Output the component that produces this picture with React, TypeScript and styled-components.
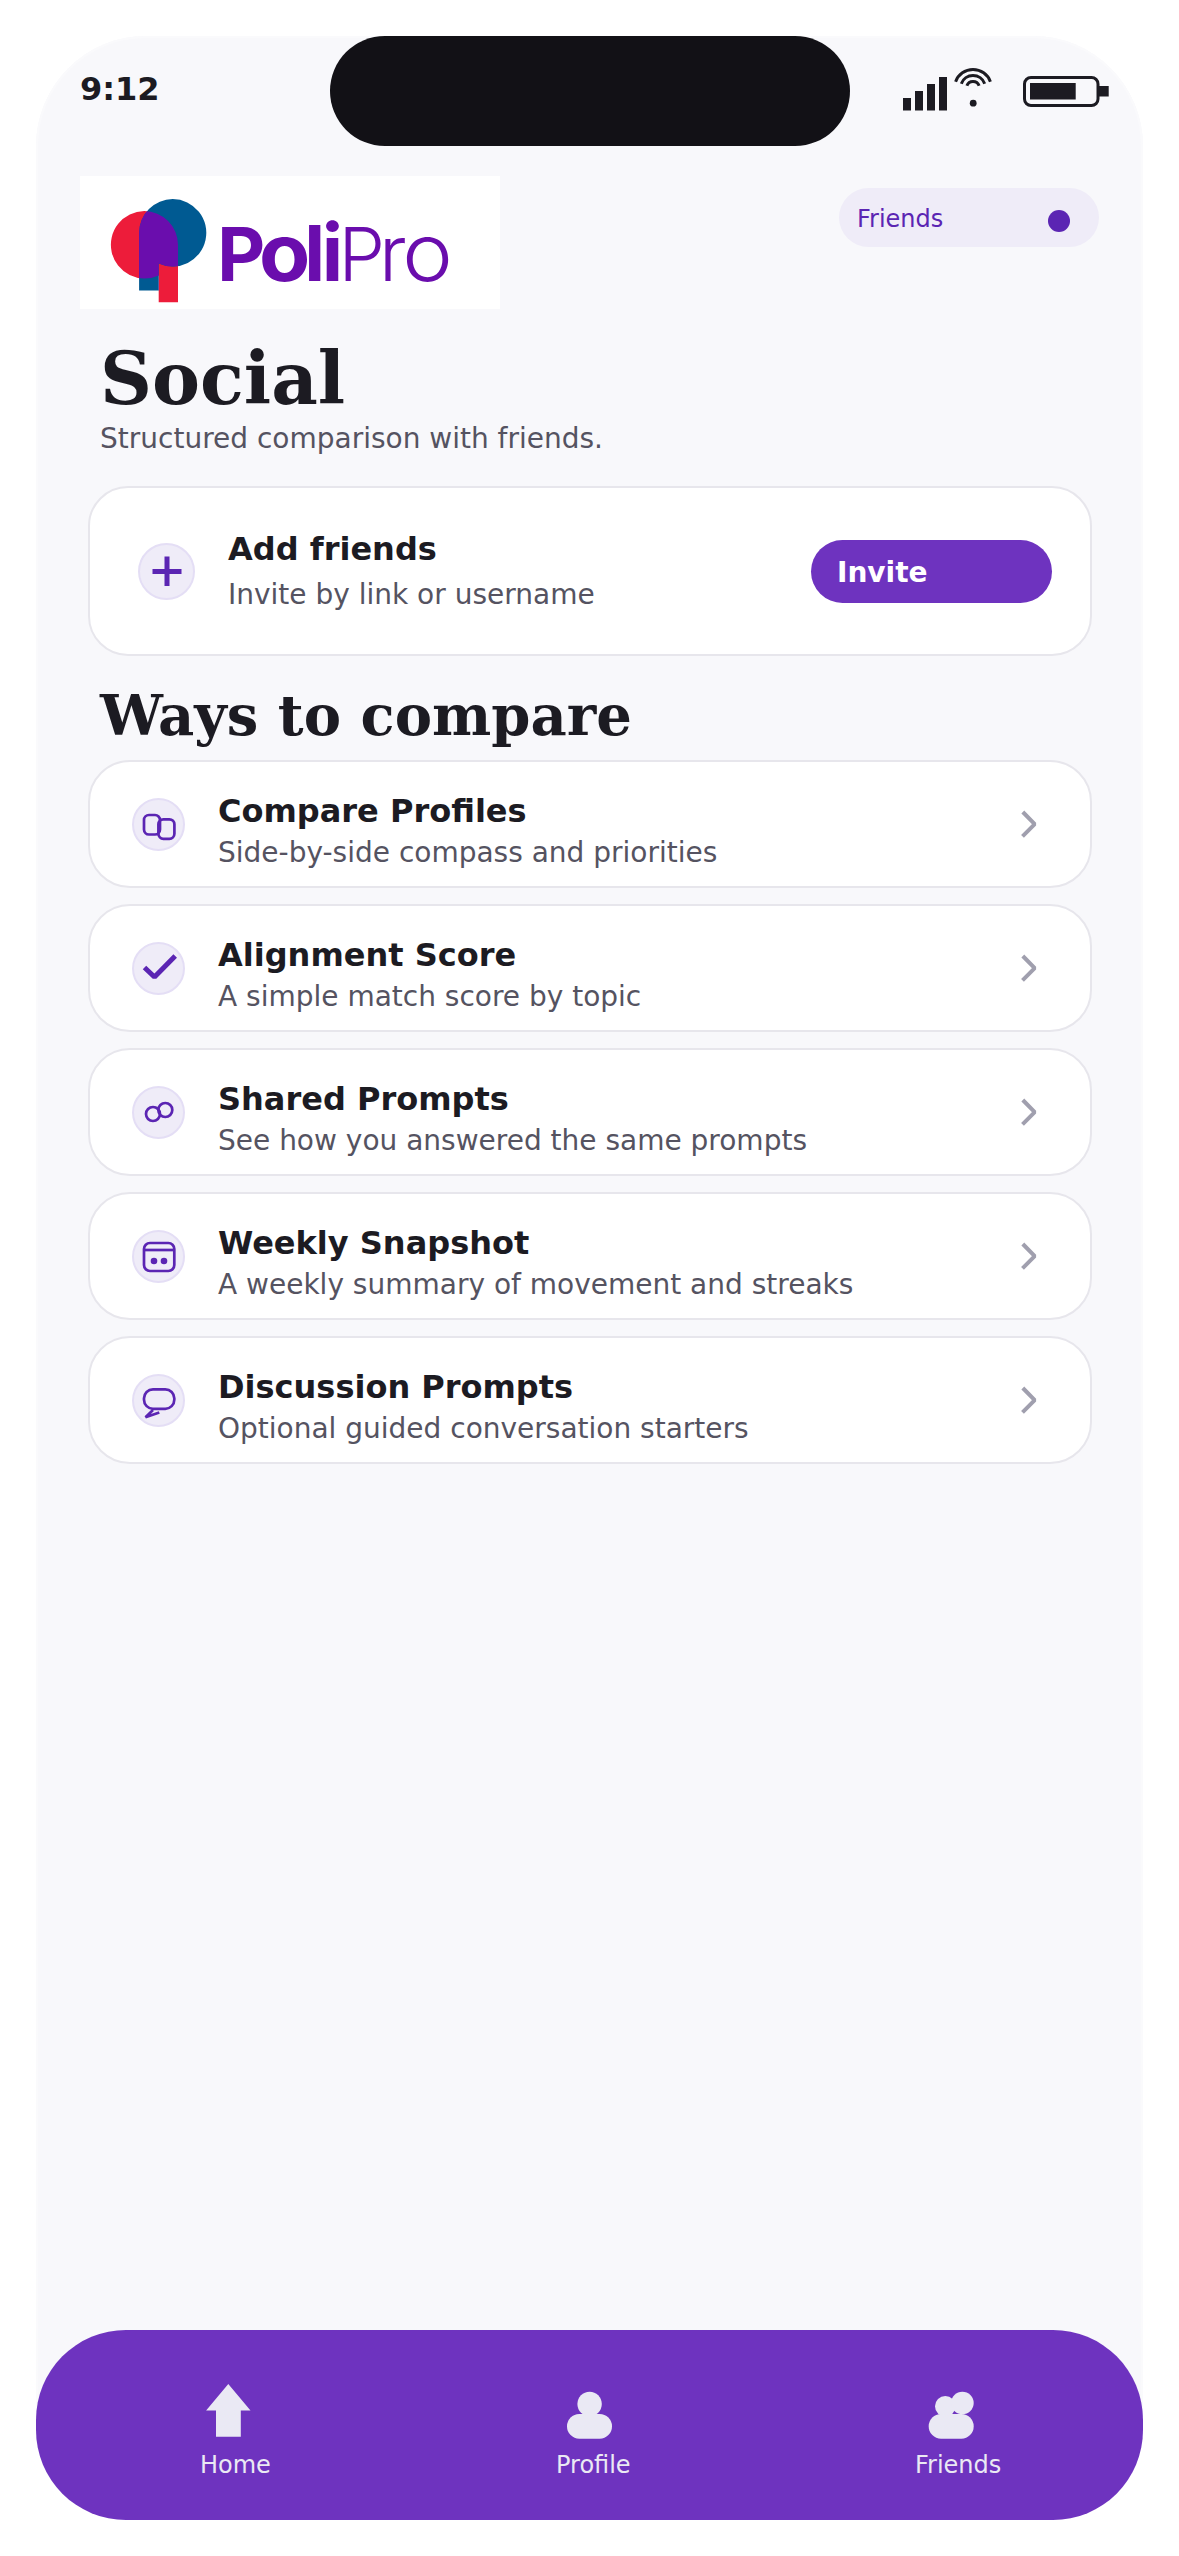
import React from "react";
import styled, { createGlobalStyle } from "styled-components";

const Global = createGlobalStyle`
  *, *::before, *::after { box-sizing: border-box; }
  body { margin: 0; background: #fff; font-family: "DejaVu Sans", sans-serif; color: #1c1b22; }
  h1, h2, h3, p { margin: 0; font-weight: inherit; }
  svg { display: block; overflow: visible; }
`;

const Page = styled.div`
  height: 2556px;
  width: 1179px;
  padding: 36px;
  background: #fff;
`;

const Phone = styled.div`
  width: 1107px;
  height: 2484px;
  display: flex;
  flex-direction: column;
  background: #f8f8fb;
  border-radius: 110px;
  box-shadow: inset 0 0 0 2px #fafafc;
`;

const StatusBar = styled.header`
  height: 110px;
  padding-left: 44px;
  display: grid;
  grid-template-columns: 250px 520px 1fr;
`;

const Clock = styled.div`
  font-size: 32px;
  font-weight: 700;
  line-height: 38px;
  padding-top: 34px;
`;

const Island = styled.div`
  background: #121116;
  border-radius: 55px;
`;

const BrandRow = styled.div`
  display: flex;
  justify-content: space-between;
  align-items: flex-start;
  padding: 30px 44px 0;
  height: 164px;
`;

const LogoPlate = styled.div`
  width: 420px;
  height: 133px;
  background: #fff;
`;

const FriendsPill = styled.div`
  display: flex;
  align-items: center;
  justify-content: space-between;
  width: 260px;
  height: 59px;
  margin-top: 12px;
  padding: 2px 29px 0 18px;
  border-radius: 30px;
  background: #efecf8;
  color: #5b25b3;
  font-size: 24px;
`;

const Dot = styled.span`
  width: 22px;
  height: 22px;
  margin-top: 5px;
  border-radius: 50%;
  background: #5b25b3;
`;

const Main = styled.main`
  flex: 1;
  padding: 0 51px 0 52px;
`;

const Title = styled.h1`
  font: 700 72px/84px "DejaVu Serif", serif;
  padding: 27px 0 0 12px;
  height: 111px;
`;

const Lead = styled.p`
  padding: 1px 0 0 12px;
  height: 65px;
  font-size: 28px;
  line-height: 34px;
  color: #555361;
`;

const Heading = styled.h2`
  font: 700 56px/66px "DejaVu Serif", serif;
  padding: 26px 0 0 12px;
  height: 104px;
`;

const Card = styled.section<{ $tall?: boolean }>`
  display: flex;
  align-items: center;
  height: ${(p) => (p.$tall ? 170 : 128)}px;
  padding: ${(p) => (p.$tall ? "0 38px 0 48px" : "0 53px 0 42px")};
  background: #fff;
  border: 2px solid #e7e6ec;
  border-radius: ${(p) => (p.$tall ? 40 : 42)}px;
`;

const IconDisc = styled.div<{ $size: number }>`
  flex: none;
  display: flex;
  align-items: center;
  justify-content: center;
  width: ${(p) => p.$size}px;
  height: ${(p) => p.$size}px;
  border-radius: 50%;
  border: 2px solid #e4def5;
  background: #efecf8;
`;

const Copy = styled.div<{ $gap: number; $drop?: number }>`
  flex: 1;
  display: flex;
  flex-direction: column;
  gap: ${(p) => p.$gap}px;
  padding-left: 33px;
  padding-top: ${(p) => p.$drop ?? 0}px;
`;

const CardTitle = styled.h3`
  font-size: 32px;
  font-weight: 700;
  line-height: 38px;
`;

const CardText = styled.p`
  font-size: 28px;
  line-height: 34px;
  color: #555361;
`;

const InviteButton = styled.button`
  width: 241px;
  height: 63px;
  padding: 2px 0 0 26px;
  border: 0;
  border-radius: 32px;
  background: #6e33bf;
  color: #fff;
  font: 700 28px "DejaVu Sans", sans-serif;
  text-align: left;
`;

const List = styled.div`
  display: flex;
  flex-direction: column;
  gap: 16px;
`;

const NavBar = styled.nav`
  display: grid;
  grid-template-columns: 356px 359px 1fr;
  height: 190.5px;
  padding: 54px 0 0 164px;
  border-radius: 90px;
  background: #6e33bf;
  color: #eae9f4;
  font-size: 24px;
`;

const NavItem = styled.a`
  display: flex;
  flex-direction: column;
  gap: 14px;
  line-height: 28px;
`;

const ink = "#1c1b22";
const accent = "#5b25b3";
const violet = "#6a0dad";

const StatusIcons = () => (
  <svg width="249" height="110" viewBox="850 36 249 110" fill={ink}>
    <path d="M903 98h8v12.5h-8zM915 91h8v19.5h-8zM927 84h8v26.5h-8zM939 77h8v33.5h-8z" />
    <g fill="none" stroke={ink} strokeWidth="3">
      <path d="M955.6 81.7a18.5 18.5 0 0 1 34.8 0M961.3 83.7a12.5 12.5 0 0 1 23.4 0M966.9 85.8a6.5 6.5 0 0 1 12.2 0" />
      <rect x="1024.5" y="77.5" width="73.5" height="28" rx="6.5" />
    </g>
    <circle cx="973.2" cy="103.2" r="3.4" />
    <path d="M1030 83h45.7v16.6H1030zM1099 86h9.7v10.6h-9.7z" />
  </svg>
);

const redBalloon = "M144.3 211.1a33.7 33.7 0 0 1 33.7 33.7V302.3H158.7V275.4A33.7 33.7 0 1 1 144.3 211.1z";
const blueBalloon = "M172.7 199.1a33.7 33.7 0 1 1-14 64.4V290.6H139.1V232.8a33.7 33.7 0 0 1 33.6-33.7z";

// Wordmark letters: bold "Poli", light "Pro", round letters slightly widened.
const wordmark = [
  { char: "P", x: 217.3, size: 74, weight: 700, stretch: 1 },
  { char: "o", x: 259, size: 79, weight: 700, stretch: 1.06 },
  { char: "l", x: 304.3, size: 77, weight: 700, stretch: 1 },
  { char: "i", x: 321.7, size: 79, weight: 700, stretch: 1 },
  { char: "P", x: 338.5, size: 74, weight: 350, stretch: 1 },
  { char: "r", x: 379, size: 77, weight: 350, stretch: 1 },
  { char: "o", x: 402.3, size: 79, weight: 350, stretch: 1.08 },
];

// Where the balloons overlap, the blue one is repainted violet.
const Logo = () => (
  <svg width="420" height="133" viewBox="80 176 420 133">
    <defs>
      <clipPath id="redShape">
        <path d={redBalloon} />
      </clipPath>
    </defs>
    <path d={redBalloon} fill="#ed1c3a" />
    <path d={blueBalloon} fill="#005a92" />
    <path d={blueBalloon} fill={violet} clipPath="url(#redShape)" />
    <g fill={violet} fontFamily="Inter, sans-serif">
      {wordmark.map((l) => (
        <text
          key={l.x}
          transform={`translate(${l.x} 281) scale(${l.stretch} 1)`}
          fontSize={l.size}
          fontWeight={l.weight}
        >
          {l.char}
        </text>
      ))}
    </g>
  </svg>
);

const Plus = () => (
  <svg width="30" height="30" viewBox="-15 -15 30 30" stroke={accent} strokeWidth="5">
    <path d="M-14.5 .5h29M0-14.5v29.5" />
  </svg>
);

const glyphs = {
  compare: (
    <>
      <rect x="-15" y="-9" width="16" height="19.5" rx="5" />
      <rect x="-.6" y="-4.7" width="16" height="19.5" rx="5" />
    </>
  ),
  check: <path d="M-14.5-.5L-4.5 9 16.2-12" strokeWidth="5" strokeLinejoin="bevel" />,
  shared: (
    <>
      <circle cx="-6" cy="2" r="7" />
      <circle cx="6.3" cy="-2" r="7" />
    </>
  ),
  calendar: (
    <>
      <rect x="-15" y="-13" width="30.3" height="28" rx="6" />
      <path d="M-15-6h30" />
      <circle cx="-5" cy="5" r="3.3" fill={accent} stroke="none" />
      <circle cx="5" cy="5" r="3.3" fill={accent} stroke="none" />
    </>
  ),
  chat: (
    <>
      <rect x="-15" y="-10.7" width="30.3" height="19.5" rx="9" />
      <path d="M-6 10L-13.5 17.3 .3 12.5" />
    </>
  ),
};

const Chevron = () => (
  <svg width="16" height="28" viewBox="0 0 16 28" fill="none" stroke="#a09fae" strokeWidth="4">
    <path d="M1.8 2L13.7 14.2 1.5 26.3" strokeLinejoin="bevel" />
  </svg>
);

const options: { icon: keyof typeof glyphs; title: string; text: string }[] = [
  { icon: "compare", title: "Compare Profiles", text: "Side-by-side compass and priorities" },
  { icon: "check", title: "Alignment Score", text: "A simple match score by topic" },
  { icon: "shared", title: "Shared Prompts", text: "See how you answered the same prompts" },
  { icon: "calendar", title: "Weekly Snapshot", text: "A weekly summary of movement and streaks" },
  { icon: "chat", title: "Discussion Prompts", text: "Optional guided conversation starters" },
];

const tabs = [
  { label: "Home", view: "200 2384 60 53", shape: <path d="M228.3 2384l22.2 26.5h-9.7v26.2H216v-26.2h-9.9z" /> },
  {
    label: "Profile",
    view: "556 2384 60 53",
    shape: (
      <>
        <ellipse cx="589.6" cy="2404" rx="12.2" ry="12.3" />
        <rect x="567" y="2414" width="45" height="24.7" rx="12.3" />
      </>
    ),
  },
  {
    label: "Friends",
    view: "915 2384 60 53",
    shape: (
      <>
        <circle cx="945.3" cy="2406.3" r="10.3" />
        <circle cx="962.4" cy="2403" r="11.3" />
        <rect x="928.7" y="2414" width="45" height="24.7" rx="12.3" />
      </>
    ),
  },
];

export default function App() {
  return (
    <Page>
      <Global />
      <Phone>
        <StatusBar>
          <Clock>9:12</Clock>
          <Island />
          <StatusIcons />
        </StatusBar>
        <BrandRow>
          <LogoPlate>
            <Logo />
          </LogoPlate>
          <FriendsPill>
            Friends
            <Dot />
          </FriendsPill>
        </BrandRow>
        <Main>
          <Title>Social</Title>
          <Lead>Structured comparison with friends.</Lead>
          <Card $tall>
            <IconDisc $size={57}>
              <Plus />
            </IconDisc>
            <Copy $gap={10}>
              <CardTitle>Add friends</CardTitle>
              <CardText>Invite by link or username</CardText>
            </Copy>
            <InviteButton>Invite</InviteButton>
          </Card>
          <Heading>Ways to compare</Heading>
          <List>
            {options.map((o) => (
              <Card key={o.title}>
                <IconDisc $size={53}>
                  <svg width="40" height="40" viewBox="-20 -20 40 40" fill="none" stroke={accent} strokeWidth="2.7">
                    {glyphs[o.icon]}
                  </svg>
                </IconDisc>
                <Copy $gap={6} $drop={13}>
                  <CardTitle>{o.title}</CardTitle>
                  <CardText>{o.text}</CardText>
                </Copy>
                <Chevron />
              </Card>
            ))}
          </List>
        </Main>
        <NavBar>
          {tabs.map((t) => (
            <NavItem key={t.label}>
              <svg width="60" height="53" viewBox={t.view} fill="#eae9f4">
                {t.shape}
              </svg>
              {t.label}
            </NavItem>
          ))}
        </NavBar>
      </Phone>
    </Page>
  );
}
